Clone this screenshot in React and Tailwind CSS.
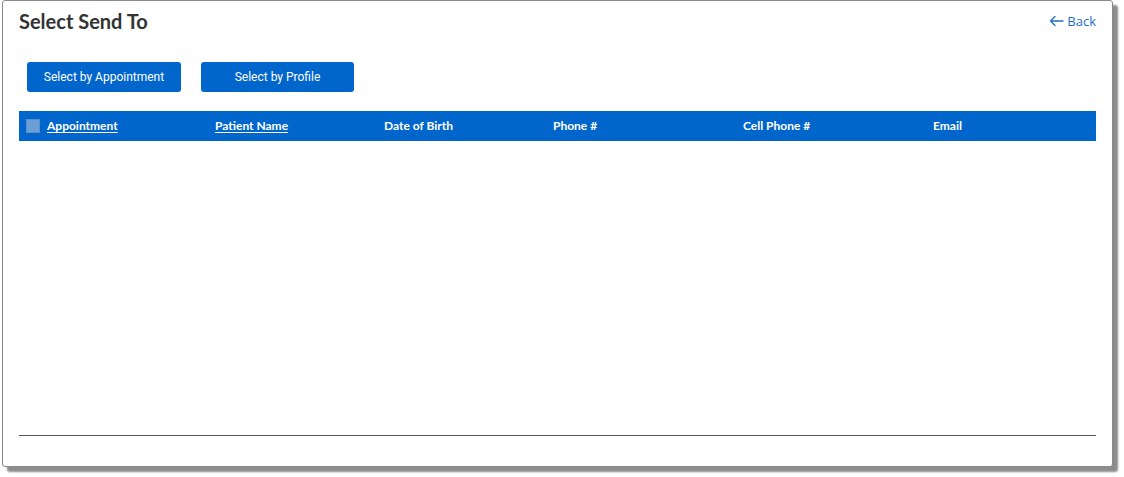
import React from "react";

export default function App() {
  const th = "text-[12px] leading-[14px] font-bold text-white";
  const col = "flex items-center";
  return (
    <div className="w-[1124px] h-[477px] bg-white overflow-hidden" style={{ fontFamily: "Roboto, sans-serif" }}>
      <div className="ml-[2px] w-[1111px] h-[467px] bg-white border border-[#8a8a8a] rounded-[3px] shadow-[5px_5px_2px_rgba(0,0,0,0.45)] flex flex-col px-[16px] pt-[6px]">
        <div className="flex items-start justify-between">
          <h1 className="text-[20px] leading-[28px] font-bold text-[#333333]" style={{ fontFamily: "Lato, sans-serif" }}>
            Select Send To
          </h1>
          <a className="mt-[4px] flex items-center gap-[3px] text-[14px] leading-[20px] text-[#1f6fc5] cursor-pointer" style={{ fontFamily: "'Open Sans', sans-serif" }}>
            <svg width="15" height="12" viewBox="0 0 15 12" fill="none" stroke="currentColor" strokeWidth="1.3" strokeLinecap="round" strokeLinejoin="round">
              <path d="M14 6H1.5M6 1.5L1.5 6L6 10.5" />
            </svg>
            <span className="text-[13px]">Back</span>
          </a>
        </div>
        <div className="flex gap-[20px] mt-[27px] ml-[8px]">
          <button className="w-[154px] h-[30px] rounded-[3px] bg-[#0066cc] text-white text-[12px]">Select by Appointment</button>
          <button className="w-[153px] h-[30px] rounded-[3px] bg-[#0066cc] text-white text-[12px]">Select by Profile</button>
        </div>
        <div className="mt-[19px] h-[30px] bg-[#0066cc] flex items-center" style={{ fontFamily: "Lato, sans-serif" }}>
          <div className="w-[196px] flex items-center pl-[7px] gap-[7px]">
            <span className="w-[14px] h-[14px] bg-[#6b9ed6] border border-[#5b8fcb]" />
            <span className={th + " underline underline-offset-2"}>Appointment</span>
          </div>
          <div className={"w-[169px] " + col}><span className={th + " underline underline-offset-2"}>Patient Name</span></div>
          <div className={"w-[169px] " + col}><span className={th}>Date of Birth</span></div>
          <div className={"w-[190px] " + col}><span className={th}>Phone #</span></div>
          <div className={"w-[190px] " + col}><span className={th}>Cell Phone #</span></div>
          <div className={"flex-1 " + col}><span className={th}>Email</span></div>
        </div>
        <div className="flex-1" />
        <div className="h-px bg-[#555555] mb-[30px]" />
      </div>
    </div>
  );
}
